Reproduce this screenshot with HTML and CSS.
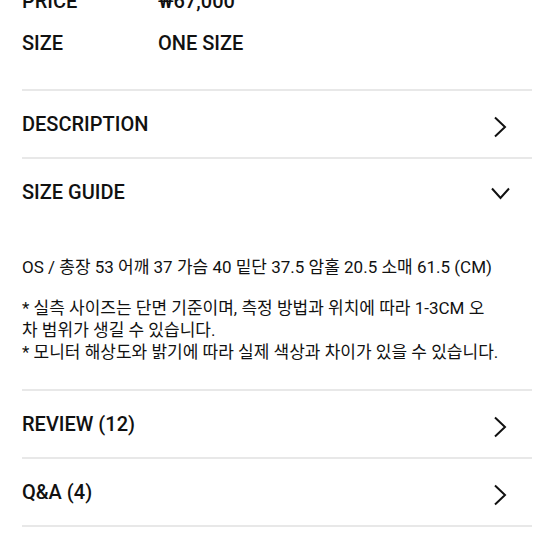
FILE: index.html
```html
<!DOCTYPE html>
<html lang="ko">
<head>
<meta charset="utf-8">
<link rel="stylesheet" href="styles.css">
</head>
<body>
<div class="page">
  <div class="info">
    <div class="info-row"><span class="label">PRICE</span><span class="value">₩67,000</span></div>
    <div class="info-row"><span class="label">SIZE</span><span class="value">ONE SIZE</span></div>
  </div>

  <div class="section">
    <div class="head">
      <span class="title">DESCRIPTION</span>
      <svg class="chev" width="22" height="22" viewBox="0 0 22 22"><path d="M7 1.5 L17 11 L7 20.5" fill="none" stroke="#111" stroke-width="2"/></svg>
    </div>
  </div>

  <div class="section">
    <div class="head">
      <span class="title">SIZE GUIDE</span>
      <svg class="chev" width="22" height="22" viewBox="0 0 22 22"><path d="M4 4.5 L12.5 14 L21 4.5" fill="none" stroke="#111" stroke-width="2"/></svg>
    </div>
    <div class="guide">
      <p class="spec">OS / 총장 53 어깨 37 가슴 40 밑단 37.5 암홀 20.5 소매 61.5 (CM)</p>
      <p class="note">* 실측 사이즈는 단면 기준이며, 측정 방법과 위치에 따라 1-3CM 오<br>차 범위가 생길 수 있습니다.<br>* 모니터 해상도와 밝기에 따라 실제 색상과 차이가 있을 수 있습니다.</p>
    </div>
  </div>

  <div class="section">
    <div class="head">
      <span class="title">REVIEW (12)</span>
      <svg class="chev" width="22" height="22" viewBox="0 0 22 22"><path d="M7 1.5 L17 11 L7 20.5" fill="none" stroke="#111" stroke-width="2"/></svg>
    </div>
  </div>

  <div class="section last">
    <div class="head">
      <span class="title">Q&amp;A (4)</span>
      <svg class="chev" width="22" height="22" viewBox="0 0 22 22"><path d="M7 1.5 L17 11 L7 20.5" fill="none" stroke="#111" stroke-width="2"/></svg>
    </div>
  </div>
</div>
</body>
</html>
```

FILE: styles.css
```css
html, body {
  margin: 0;
  padding: 0;
  background: #fff;
}
body {
  font-family: Roboto, "Noto Sans CJK KR", sans-serif;
  color: #111;
  overflow: hidden;
}
.page {
  width: 510px;
  margin-left: 22px;
}
.info {
  margin-top: -20px;
  padding-bottom: 25px;
}
.info-row {
  display: flex;
  height: 42px;
  line-height: 42px;
  font-size: 20px;
  font-weight: 500;
}
.label {
  width: 136px;
}
.section {
  border-top: 2px solid #e8e8e8;
}
.section.last {
  border-bottom: 2px solid #e8e8e8;
}
.head {
  display: flex;
  align-items: center;
  justify-content: space-between;
  height: 66px;
  padding-right: 22px;
}
.title {
  font-size: 20px;
  font-weight: 500;
}
.chev {
  margin-top: 5px;
}
.guide {
  padding: 31px 0 26px;
  font-size: 17px;
  line-height: 22px;
  white-space: nowrap;
}
.guide p {
  margin: 0;
}
.guide .spec {
  margin-bottom: 19px;
}
```
